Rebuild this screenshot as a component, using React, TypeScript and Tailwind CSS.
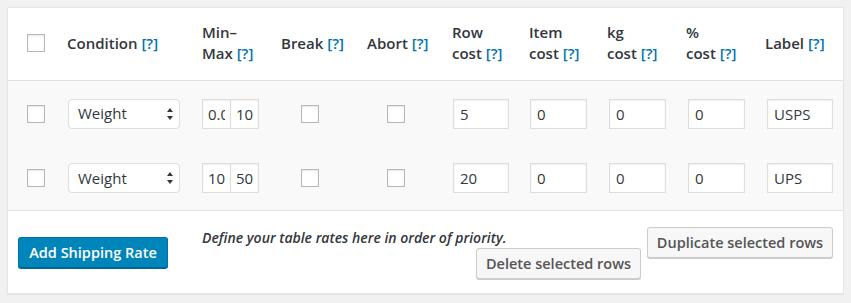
import React from 'react';

type Rate = {
  min: string;
  max: string;
  row: string;
  item: string;
  kg: string;
  pct: string;
  label: string;
};

const rates: Rate[] = [
  { min: '0.0', max: '10', row: '5', item: '0', kg: '0', pct: '0', label: 'USPS' },
  { min: '10', max: '50', row: '20', item: '0', kg: '0', pct: '0', label: 'UPS' },
];

const cols = 'grid grid-cols-[49px_135px_79px_86px_85px_77px_78px_79px_79px_87px]';

const Help = () => <span className="text-[#0073aa]">[?]</span>;

const Checkbox = () => (
  <span className="block w-[18px] h-[18px] border border-[#b4b9be] bg-white shadow-[inset_0_1px_2px_rgba(0,0,0,0.1)]" />
);

const TextInput = ({ value, className }: { value: string; className: string }) => (
  <input
    readOnly
    value={value}
    className={`h-[30px] border border-[#ddd] bg-white text-[15px] text-[#32373c] shadow-[inset_0_1px_2px_rgba(0,0,0,0.07)] outline-none ${className}`}
  />
);

const SelectBox = () => (
  <div className="ml-[1px] flex h-[30px] w-[112px] items-center justify-between rounded-[4px] border border-[#ddd] bg-white pl-[9px] pr-[5px] text-[15px] text-[#32373c]">
    <span>Weight</span>
    <svg width="8" height="14" viewBox="0 0 8 14">
      <path d="M4 1 L7 5 L1 5 Z" fill="#32373c" />
      <path d="M1 9 L7 9 L4 13 Z" fill="#32373c" />
    </svg>
  </div>
);

const GrayButton = ({ children, className }: { children: React.ReactNode; className: string }) => (
  <button className={`h-[31px] rounded-[3px] border border-[#ccc] bg-[#f7f7f7] text-[14.5px] font-semibold text-[#555] shadow-[0_1px_0_#ccc] ${className}`}>
    {children}
  </button>
);

export default function App() {
  return (
    <div
      className="min-h-[303px] w-[851px] bg-[#f1f1f1] pl-[7px] pt-[7px]"
      style={{ fontFamily: '"Open Sans", "Liberation Sans", sans-serif' }}
    >
      <div className="w-[837px] border border-[#e5e5e5] bg-white shadow-[0_1px_1px_rgba(0,0,0,0.04)]">
        {/* header */}
        <div className={`${cols} h-[73px] items-center border-b border-[#e1e1e1] pb-[2px] text-[15px] font-semibold leading-[21px] text-[#32373c]`}>
          <div className="pl-[19px]">
            <Checkbox />
          </div>
          <div className="pl-[10px]">
            Condition <Help />
          </div>
          <div className="pl-[10px]">
            Min–<br />Max <Help />
          </div>
          <div className="pl-[10px]">
            Break <Help />
          </div>
          <div className="pl-[10px]">
            Abort <Help />
          </div>
          <div className="pl-[10px]">
            Row<br />cost <Help />
          </div>
          <div className="pl-[10px]">
            Item<br />cost <Help />
          </div>
          <div className="pl-[10px]">
            kg<br />cost <Help />
          </div>
          <div className="pl-[10px]">
            %<br />cost <Help />
          </div>
          <div className="pl-[10px]">
            Label <Help />
          </div>
        </div>

        {/* rows */}
        <div className="border-b border-[#e1e1e1] bg-[#f9f9f9]">
          {rates.map((r, i) => (
            <div key={i} className={`${cols} items-center ${i === 0 ? 'h-[65px]' : 'h-[64px]'}`}>
              <div className="pl-[19px]">
                <Checkbox />
              </div>
              <div className="pl-[10px]">
                <SelectBox />
              </div>
              <div className="flex pl-[10px]">
                <TextInput value={r.min} className="w-[29px] px-[5px]" />
                <TextInput value={r.max} className="-ml-px w-[29px] px-[5px]" />
              </div>
              <div className="pl-[30px]">
                <Checkbox />
              </div>
              <div className="pl-[30px]">
                <Checkbox />
              </div>
              <div className="pl-[11px]">
                <TextInput value={r.row} className="w-[56px] pl-[6px]" />
              </div>
              <div className="pl-[11px]">
                <TextInput value={r.item} className="w-[57px] pl-[6px]" />
              </div>
              <div className="pl-[12px]">
                <TextInput value={r.kg} className="w-[57px] pl-[6px]" />
              </div>
              <div className="pl-[12px]">
                <TextInput value={r.pct} className="w-[57px] pl-[6px]" />
              </div>
              <div className="pl-[12px]">
                <TextInput value={r.label} className="w-[66px] pl-[6px]" />
              </div>
            </div>
          ))}
        </div>

        {/* footer */}
        <div className="flex items-start pb-[14px] pl-[10px] pr-[10px] pt-[16px]">
          <button className="mt-[10px] h-[31px] w-[150px] shrink-0 rounded-[3px] border border-[#0073aa] border-b-[#006799] bg-[#0085ba] text-[14.5px] font-semibold text-white shadow-[0_1px_0_#006799]">
            Add Shipping Rate
          </button>
          <p className="ml-[34px] mt-[1px] w-[273px] shrink-0 whitespace-nowrap text-[14px] font-semibold italic leading-[20px] text-[#32373c]">
            Define your table rates here in order of priority.
          </p>
          <div className="ml-auto flex h-[52px] gap-[6px]">
            <GrayButton className="w-[165px] self-end">Delete selected rows</GrayButton>
            <GrayButton className="w-[186px] self-start">Duplicate selected rows</GrayButton>
          </div>
        </div>
      </div>
    </div>
  );
}
